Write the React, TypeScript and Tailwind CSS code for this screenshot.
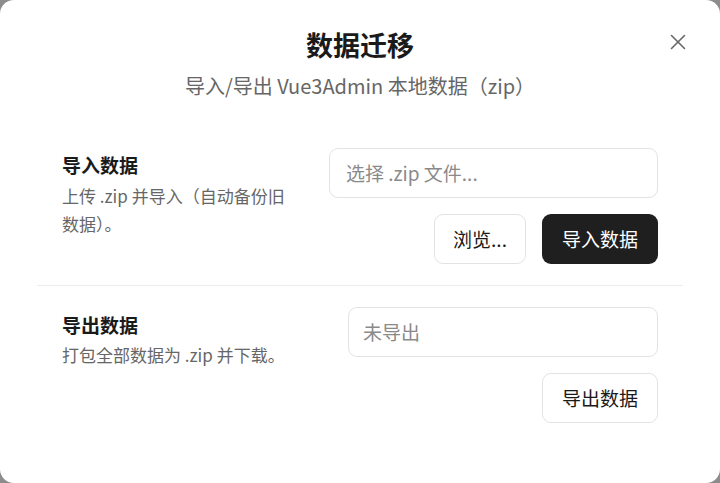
import { X } from "lucide-react";

const font = { fontFamily: '"Noto Sans CJK SC", "Noto Sans", sans-serif' };

export default function App() {
  return (
    <div className="h-[483px] w-[720px] bg-[#8c8c8c]" style={font}>
      <div className="relative h-full w-full rounded-[14px] bg-white">
        {/* Header */}
        <button className="absolute right-[29px] top-[29px] text-[#666]">
          <X size={26} strokeWidth={1.5} />
        </button>
        <div className="pt-[27px] text-center">
          <h2 className="text-[27px] font-bold leading-[36px] text-[#1a1a1a]">数据迁移</h2>
          <p className="mt-[9px] text-[20px] leading-[28px] text-[#666]">
            导入/导出 Vue3Admin 本地数据（zip）
          </p>
        </div>

        <div className="mt-[48px] px-[37px]">
          {/* Import */}
          <div className="flex justify-between px-[25px] pb-[21px]">
            <div className="w-[232px] pt-[3px]">
              <h3 className="text-[19px] font-bold leading-[28px] text-[#1a1a1a]">导入数据</h3>
              <p className="mt-[3px] text-[17px] leading-[28px] text-[#666]">
                上传 .zip 并导入（自动备份旧数据）。
              </p>
            </div>
            <div className="flex w-[329px] flex-col items-end gap-[16px]">
              <div className="flex h-[50px] w-full items-center rounded-[9px] border border-[#e3e3e3] px-[16px] text-[19px] text-[#8a8a8a]">
                选择 .zip 文件...
              </div>
              <div className="flex gap-[16px]">
                <button className="h-[50px] w-[92px] rounded-[9px] border border-[#e3e3e3] bg-white text-[19px] text-[#1a1a1a]">
                  浏览...
                </button>
                <button className="h-[50px] w-[116px] rounded-[9px] bg-[#1f1f1f] text-[19px] text-white">
                  导入数据
                </button>
              </div>
            </div>
          </div>

          <div className="h-px bg-[#ececec]" />

          {/* Export */}
          <div className="flex justify-between px-[25px] pt-[21px]">
            <div className="pt-[4px]">
              <h3 className="text-[19px] font-bold leading-[28px] text-[#1a1a1a]">导出数据</h3>
              <p className="mt-[2px] text-[17px] leading-[28px] text-[#666]">
                打包全部数据为 .zip 并下载。
              </p>
            </div>
            <div className="flex w-[310px] flex-col items-end gap-[16px]">
              <div className="flex h-[50px] w-full items-center rounded-[9px] border border-[#e3e3e3] px-[14px] text-[19px] text-[#8a8a8a]">
                未导出
              </div>
              <button className="h-[50px] w-[116px] rounded-[9px] border border-[#e3e3e3] bg-white text-[19px] text-[#1a1a1a]">
                导出数据
              </button>
            </div>
          </div>
        </div>
      </div>
    </div>
  );
}
